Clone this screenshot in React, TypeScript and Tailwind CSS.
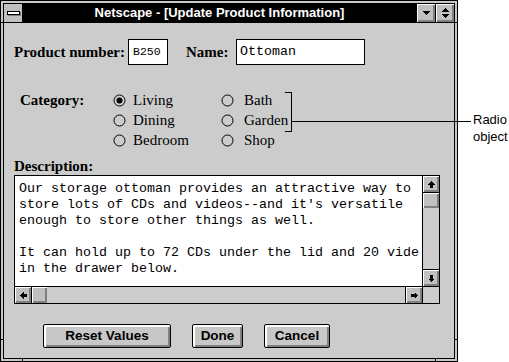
import React from "react";

const serif = "font-['Liberation_Serif','Times_New_Roman',serif]";
const sans = "font-['Liberation_Sans',Arial,sans-serif]";
const mono = "font-['Liberation_Mono','Courier_New',monospace]";

const bevel = "bg-[#c0c0c0] shadow-[inset_1px_1px_0_#fff,inset_-1px_-1px_0_#808080,inset_-2px_-2px_0_#808080]";

function Arrow({ dir }: { dir: "up" | "down" | "left" | "right" }) {
  const rot = { up: 0, right: 90, down: 180, left: 270 }[dir];
  return (
    <svg width="7" height="7" viewBox="0 0 7 7" shapeRendering="crispEdges" style={{ transform: `rotate(${rot}deg)` }}>
      <polygon points="3.5,0 7,3.5 0,3.5" fill="black" />
      <rect x="2" y="3.5" width="3" height="3.5" fill="black" />
    </svg>
  );
}

function ScrollButton({ dir }: { dir: "up" | "down" | "left" | "right" }) {
  return (
    <div className={`flex h-[16px] w-[16px] items-center justify-center ${bevel}`}>
      <Arrow dir={dir} />
    </div>
  );
}

function Radio({ label, checked, gap }: { label: string; checked?: boolean; gap: string }) {
  return (
    <div className={`flex h-[20px] items-center ${gap}`}>
      <svg width="13" height="13" viewBox="0 0 13 13">
        <circle cx="6.5" cy="6.5" r="5.5" fill="none" stroke="black" strokeWidth="1" />
        {checked && <circle cx="6.5" cy="6.5" r="3" fill="black" />}
      </svg>
      <span className={`${serif} text-[15px] leading-[20px] text-black`}>{label}</span>
    </div>
  );
}

function PushButton({ label, width }: { label: string; width: string }) {
  return (
    <button
      type="button"
      className={`${width} h-[24px] rounded-[2px] border border-black bg-[#c8c8c8] shadow-[inset_2px_2px_0_#fff,inset_-2px_-2px_0_#808080] ${sans} text-[13.5px] font-bold text-black`}
    >
      {label}
    </button>
  );
}

const description = [
  "Our storage ottoman provides an attractive way to",
  "store lots of CDs and videos--and it's versatile",
  "enough to store other things as well.",
  "",
  "It can hold up to 72 CDs under the lid and 20 vide",
  "in the drawer below.",
];

export default function App() {
  return (
    <div className="relative flex h-[362px] w-[509px] overflow-hidden bg-white">
      {/* window frame */}
      <div className="relative h-[362px] w-[458px] border border-black bg-[#c8c8c8] p-[2px]">
        <div className="flex h-full flex-col border border-black bg-[#cccccc]">
          {/* title bar */}
          <div className="flex h-[19px] border-b border-black bg-black">
            <div className="flex h-[18px] w-[18px] items-center justify-center bg-[#c0c0c0]">
              <div className="h-[4px] w-[13px] border border-black bg-white shadow-[1px_1px_0_#808080]" />
            </div>
            <div className={`flex flex-1 items-center justify-center ${sans} text-[13px] font-bold leading-[18px] text-white`}>
              Netscape - [Update Product Information]
            </div>
            <div className={`flex h-[18px] w-[18px] items-center justify-center ${bevel}`}>
              <svg width="7" height="4" viewBox="0 0 7 4" shapeRendering="crispEdges">
                <polygon points="0,0 7,0 3.5,4" fill="black" />
              </svg>
            </div>
            <div className={`ml-[1px] flex h-[18px] w-[18px] flex-col items-center justify-center gap-[2px] ${bevel}`}>
              <svg width="7" height="4" viewBox="0 0 7 4" shapeRendering="crispEdges">
                <polygon points="3.5,0 7,4 0,4" fill="black" />
              </svg>
              <svg width="7" height="4" viewBox="0 0 7 4" shapeRendering="crispEdges">
                <polygon points="0,0 7,0 3.5,4" fill="black" />
              </svg>
            </div>
          </div>

          {/* client area */}
          <div className="flex flex-1 flex-col">
            <div className="mt-[16px] flex items-center pl-[10px]">
              <span className={`${serif} w-[114px] text-[15px] font-bold text-black`}>Product number:</span>
              <div className={`flex h-[26px] w-[40px] items-center border border-black bg-white pl-[4px] ${mono} text-[11.5px] text-black`}>
                B250
              </div>
              <span className={`${serif} ml-[18px] w-[50px] text-[15px] font-bold text-black`}>Name:</span>
              <div className={`flex h-[26px] w-[129px] items-center border border-black bg-white pl-[3px] ${mono} text-[13.33px] text-black`}>
                Ottoman
              </div>
            </div>

            <div className="mt-[25px] flex pl-[16px]">
              <span className={`${serif} w-[93px] text-[15px] font-bold leading-[20px] text-black`}>Category:</span>
              <div className="flex w-[108px] flex-col">
                <Radio label="Living" checked gap="gap-[7px]" />
                <Radio label="Dining" gap="gap-[7px]" />
                <Radio label="Bedroom" gap="gap-[7px]" />
              </div>
              <div className="flex flex-col">
                <Radio label="Bath" gap="gap-[10px]" />
                <Radio label="Garden" gap="gap-[10px]" />
                <Radio label="Shop" gap="gap-[10px]" />
              </div>
            </div>

            <div className={`mt-[8px] pl-[10px] ${serif} text-[15px] font-bold leading-[17px] text-black`}>Description:</div>

            {/* text area */}
            <div className="ml-[10px] flex h-[129px] w-[426px] flex-col border border-black">
              <div className="flex flex-1 border-b border-black">
                <div className={`flex-1 overflow-hidden whitespace-pre bg-white pl-[4px] pt-[5px] ${mono} text-[13.33px] leading-[16px] text-black`}>
                  {description.map((line, i) => (
                    <div key={i} className="h-[16px]">{line}</div>
                  ))}
                </div>
                <div className="flex w-[17px] flex-col border-l border-black bg-[#cccccc]">
                  <ScrollButton dir="up" />
                  <div className={`h-[16px] w-[16px] border-t border-black ${bevel}`} />
                  <div className="flex-1" />
                  <div className="border-t border-black">
                    <ScrollButton dir="down" />
                  </div>
                </div>
              </div>
              <div className="flex h-[16px]">
                <div className="flex flex-1 bg-[#cccccc]">
                  <ScrollButton dir="left" />
                  <div className={`h-[16px] w-[16px] border-l border-black ${bevel}`} />
                  <div className="flex-1" />
                  <div className="border-l border-black">
                    <ScrollButton dir="right" />
                  </div>
                </div>
                <div className="w-[17px] border-l border-black bg-[#cccccc]" />
              </div>
            </div>

            <div className="mt-[20px] flex gap-[21px] pl-[39px]">
              <PushButton label="Reset Values" width="w-[128px]" />
              <PushButton label="Done" width="w-[51px]" />
              <PushButton label="Cancel" width="w-[66px]" />
            </div>
          </div>
        </div>

        {/* frame corner ticks */}
        <div className="absolute left-[-1px] top-[21px] h-[1px] w-[4px] bg-black" />
        <div className="absolute right-[-1px] top-[21px] h-[1px] w-[4px] bg-black" />
        <div className="absolute left-[-1px] top-[338px] h-[1px] w-[4px] bg-black" />
        <div className="absolute right-[-1px] top-[338px] h-[1px] w-[4px] bg-black" />
        <div className="absolute bottom-[-1px] left-[21px] h-[4px] w-[1px] bg-black" />
        <div className="absolute bottom-[-1px] left-[434px] h-[4px] w-[1px] bg-black" />
      </div>

      {/* callout */}
      <svg className="pointer-events-none absolute left-0 top-0" width="509" height="362" shapeRendering="crispEdges">
        <path d="M285 92.5 H291.5 V131.5 H285" fill="none" stroke="black" strokeWidth="1" />
        <path d="M291.5 121.5 H471" fill="none" stroke="black" strokeWidth="1" />
      </svg>
      <div className={`absolute left-[473px] top-[111px] ${sans} text-[13px] leading-[17px] text-black`}>
        <div>Radio</div>
        <div>object</div>
      </div>
    </div>
  );
}
